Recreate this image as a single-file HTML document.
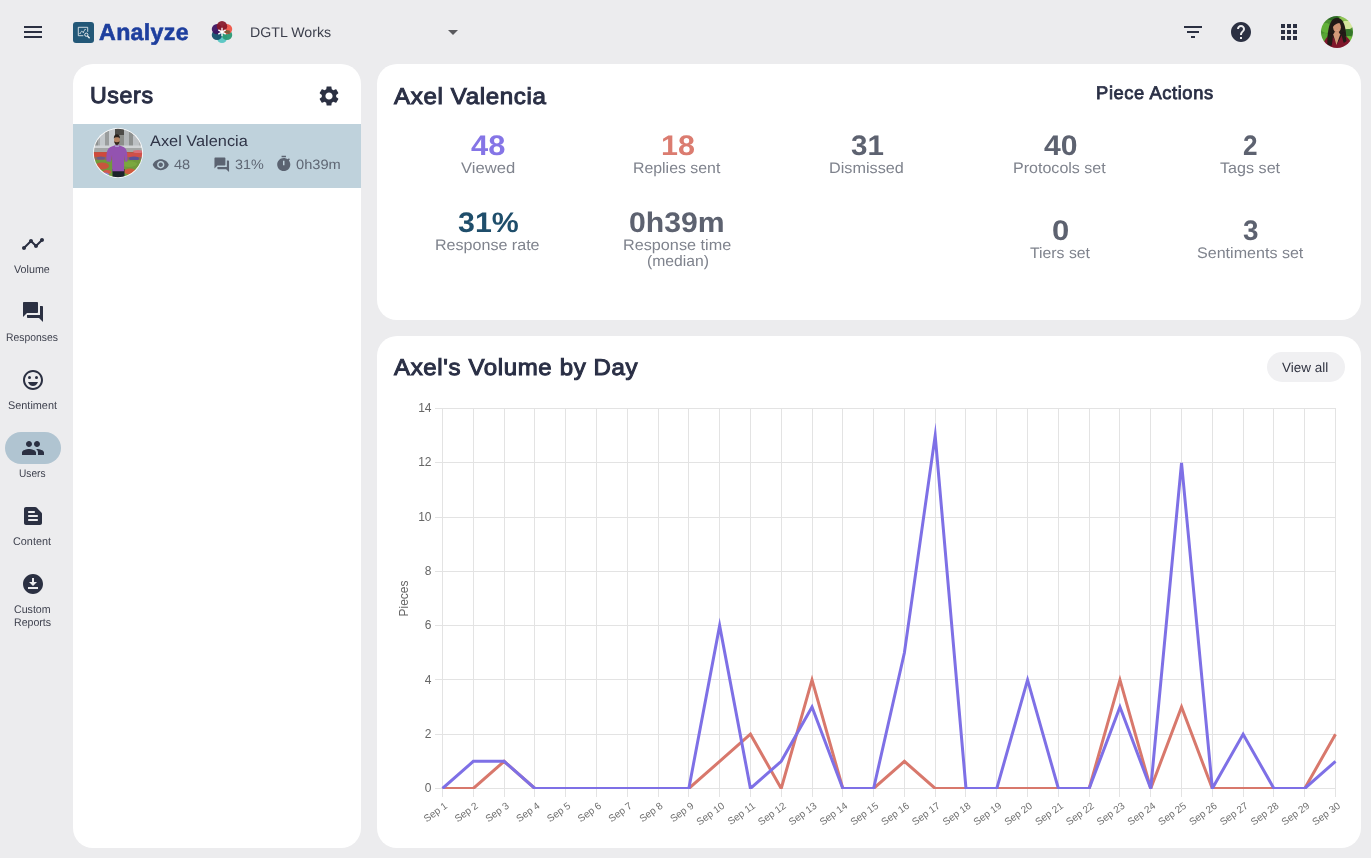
<!DOCTYPE html>
<html lang="en">
<head>
<meta charset="utf-8">
<title>Analyze - Users</title>
<style>
*{box-sizing:border-box;margin:0;padding:0}
html,body{width:1371px;height:858px;overflow:hidden}
body{background:#ECECEE;font-family:"Liberation Sans",sans-serif;color:#2a2f45;position:relative}
.abs{position:absolute}
svg{display:block}
.ico{position:absolute;width:24px;height:24px;fill:#2b3042}
.card{position:absolute;background:#fff;border-radius:20px}
.t{position:absolute;white-space:nowrap;line-height:1;transform-origin:0 0;text-rendering:geometricPrecision}
.c{transform:translateX(-50%);text-align:center}
.navl{position:absolute;left:0;width:64px;text-align:center;font-size:10.5px;line-height:13px;color:#3c3f4c;letter-spacing:.1px}
.h1{font-size:23.5px;font-weight:bold;color:#2a2f45}
.num{font-size:27px;font-weight:bold;color:#5d6270}
.lbl{font-size:14.5px;color:#7d818c}
</style>
</head>
<body>
<div id="root" style="position:absolute;left:0;top:0;width:1371px;height:858px;opacity:.999">
<!-- top bar -->
<svg class="ico" style="left:21px;top:20px" viewBox="0 0 24 24"><path d="M3 18h18v-2H3v2zm0-5h18v-2H3v2zm0-7v2h18V6H3z"/></svg>
<div class="abs" style="left:73px;top:21.5px;width:21px;height:21px;border-radius:3px;background:#235878"></div>
<svg class="abs" style="left:73px;top:21.500px;width:21px;height:21px" viewBox="0 0 21 21" fill="none" stroke="#fff" stroke-opacity=".85" stroke-width=".9"><path d="M14.700 9.800V5.300H5.300v8.400h5"/><path d="M7 11.600l1.600-2.400 1.700 1 1.800-2.800" stroke-width=".8" stroke-opacity=".8"/><circle cx="7" cy="11.600" r=".5" fill="#fff" stroke="none"/><circle cx="10.300" cy="10.200" r=".5" fill="#fff" stroke="none"/><circle cx="12.100" cy="7.400" r=".5" fill="#fff" stroke="none"/><circle cx="13.300" cy="12.700" r="1.600" stroke-opacity=".95"/><path d="M14.500 14l2.100 2.200" stroke-width="1.300" stroke-opacity=".95"/></svg>
<!-- flower logo -->
<svg class="abs" style="left:210.200px;top:19.700px;width:24px;height:24px" viewBox="-12 -12 24 24"><circle cx="0.00" cy="5.80" r="5.2" fill="#5FC8C5" fill-opacity="1"/><circle cx="-5.02" cy="2.90" r="5.2" fill="#17536E" fill-opacity="0.97"/><circle cx="5.02" cy="2.90" r="5.2" fill="#2A9A74" fill-opacity="0.95"/><circle cx="5.02" cy="-2.90" r="5.2" fill="#EE5547" fill-opacity="0.95"/><circle cx="-5.02" cy="-2.90" r="5.2" fill="#3E1562" fill-opacity="0.95"/><circle cx="0.00" cy="-5.80" r="5.2" fill="#86182A" fill-opacity="0.93"/><path d="M2 0.300L7.500 2.200 8 -1.200 3.500-2z" fill="#6d5a3a" fill-opacity=".85"/><g stroke="#fff" stroke-width="1.350"><path d="M0 -4.300V4.300M-3.700 -2.150L3.700 2.150M-3.700 2.150L3.700 -2.150"/></g><circle r="1.300" fill="#fff"/></svg>
<svg class="ico" style="left:441px;top:20px;fill:#5a5a5e" viewBox="0 0 24 24"><path d="M7 10l5 5 5-5z"/></svg>
<svg class="ico" style="left:1181px;top:20px" viewBox="0 0 24 24"><path d="M10 18h4v-2h-4v2zM3 6v2h18V6H3zm3 7h12v-2H6v2z"/></svg>
<svg class="ico" style="left:1229px;top:20px" viewBox="0 0 24 24"><path d="M12 2C6.480 2 2 6.480 2 12s4.480 10 10 10 10-4.480 10-10S17.520 2 12 2zm1 17h-2v-2h2v2zm2.070-7.750l-.9.920C13.450 12.900 13 13.500 13 15h-2v-.5c0-1.100.45-2.100 1.170-2.830l1.240-1.260c.37-.36.590-.86.590-1.410 0-1.100-.9-2-2-2s-2 .9-2 2H8c0-2.210 1.790-4 4-4s4 1.790 4 4c0 .88-.36 1.680-.93 2.250z"/></svg>
<svg class="ico" style="left:1277px;top:20px" viewBox="0 0 24 24"><path d="M4 8h4V4H4v4zm6 12h4v-4h-4v4zm-6 0h4v-4H4v4zm0-6h4v-4H4v4zm6 0h4v-4h-4v4zm6-10v4h4V4h-4zm-6 4h4V4h-4v4zm6 6h4v-4h-4v4zm0 6h4v-4h-4v4z"/></svg>
<!-- user avatar top right -->
<svg class="abs" style="left:1321px;top:16px;width:32px;height:32px" viewBox="0 0 32 32">
<defs><clipPath id="av1"><circle cx="16" cy="16" r="16"/></clipPath><filter id="bl1" x="-20%" y="-20%" width="140%" height="140%"><feGaussianBlur stdDeviation=".7"/></filter></defs>
<g clip-path="url(#av1)"><g filter="url(#bl1)">
<rect x="-4" y="-4" width="40" height="40" fill="#4a8f2e"/>
<ellipse cx="26" cy="9" rx="6" ry="4.500" fill="#d4e79c"/>
<ellipse cx="24" cy="2.500" rx="6" ry="2.500" fill="#8fc455"/>
<ellipse cx="5" cy="12" rx="5" ry="5" fill="#62b037"/>
<ellipse cx="4" cy="21" rx="4" ry="4" fill="#58a535"/>
<ellipse cx="12" cy="2" rx="6" ry="2.500" fill="#2f6a25"/>
<ellipse cx="27" cy="17" rx="5" ry="4" fill="#35762a"/>
<ellipse cx="28" cy="23" rx="4" ry="3" fill="#6dbb3a"/>
<path d="M6 32c0-9 1-20 3-24 1.500-4 4-6.200 7-6.200s5.500 2 7 6c2 5 2.500 12 2.500 24z" fill="#231a19"/>
<ellipse cx="16" cy="11.200" rx="3.900" ry="5.200" fill="#cf9472"/>
<path d="M11.500 11c0-4 2-6.500 4.500-6.500 1.500 0 3 1 3.800 2.500-2.300-.5-5.300.5-8.300 4z" fill="#231a19"/>
<path d="M2 34c0-9 3-14 9-15l5 9 5-9c6 1 10 6 10 15z" fill="#7f142b"/>
<path d="M12.200 18.500l3.300 10.500 3.700-10.500-1.500-2.500h-4z" fill="#d39a78"/>
<path d="M14 13.500c1 1.200 3 1.200 4 0-.5 1.500-3.500 1.500-4 0z" fill="#f3dfd4"/><path d="M7.500 17c-1 4-1.500 8-1 12l4 1c1-4 1.500-8 1.200-12z" fill="#231a19"/><path d="M20.300 17.500c.5 3 1.500 6.500 2.500 9.500l2.800-2c-.8-3-1.300-6-1.600-9z" fill="#231a19"/>
</g></g></svg>

<!-- side nav -->
<svg class="ico" style="left:21px;top:232px" viewBox="0 0 24 24"><path d="M23 8c0 1.100-.9 2-2 2-.18 0-.35-.02-.51-.07l-3.560 3.550c.05.160.07.340.07.520 0 1.100-.9 2-2 2s-2-.9-2-2c0-.18.020-.36.070-.52l-2.550-2.550c-.16.050-.34.070-.52.070s-.36-.02-.52-.07l-4.550 4.560c.05.160.07.330.07.510 0 1.100-.9 2-2 2s-2-.9-2-2 .9-2 2-2c.18 0 .35.020.51.070l4.560-4.550C8.020 9.360 8 9.180 8 9c0-1.100.9-2 2-2s2 .9 2 2c0 .18-.02.360-.07.520l2.550 2.550c.16-.05.340-.07.520-.07s.36.020.52.070l3.550-3.560C19.020 8.350 19 8.180 19 8c0-1.100.9-2 2-2s2 .9 2 2z"/></svg>
<svg class="ico" style="left:21px;top:300px" viewBox="0 0 24 24"><path d="M21 6h-2v9H6v2c0 .55.450 1 1 1h11l4 4V7c0-.55-.45-1-1-1zm-4 6V3c0-.55-.45-1-1-1H3c-.55 0-1 .45-1 1v14l4-4h10c.55 0 1-.45 1-1z"/></svg>
<svg class="ico" style="left:21px;top:368px" viewBox="0 0 24 24"><circle cx="15.500" cy="9.500" r="1.500"/><circle cx="8.500" cy="9.500" r="1.500"/><path d="M11.990 2C6.470 2 2 6.480 2 12s4.470 10 9.990 10C17.520 22 22 17.520 22 12S17.520 2 11.990 2zM12 20c-4.420 0-8-3.580-8-8s3.580-8 8-8 8 3.580 8 8-3.580 8-8 8zm-5-6c.78 2.340 2.720 4 5 4s4.220-1.660 5-4H7z"/></svg>
<div class="abs" style="left:5px;top:432px;width:56px;height:32px;border-radius:16px;background:#B0C4D1"></div>
<svg class="ico" style="left:21px;top:436px" viewBox="0 0 24 24"><path d="M16 11c1.660 0 2.990-1.340 2.990-3S17.660 5 16 5c-1.660 0-3 1.340-3 3s1.340 3 3 3zm-8 0c1.660 0 2.990-1.340 2.990-3S9.660 5 8 5C6.340 5 5 6.340 5 8s1.340 3 3 3zm0 2c-2.330 0-7 1.170-7 3.500V19h14v-2.500c0-2.330-4.670-3.500-7-3.500zm8 0c-.29 0-.62.020-.97.050 1.160.84 1.970 1.970 1.970 3.450V19h6v-2.500c0-2.330-4.670-3.500-7-3.500z"/></svg>
<svg class="ico" style="left:21px;top:504px" viewBox="0 0 24 24"><path d="M14.170 3H5c-1.100 0-2 .9-2 2v14c0 1.100.9 2 2 2h14c1.100 0 2-.9 2-2V9.830c0-.53-.21-1.040-.59-1.410l-4.830-4.830c-.37-.38-.88-.59-1.410-.59zM8 15h8c.55 0 1 .45 1 1s-.45 1-1 1H8c-.55 0-1-.45-1-1s.45-1 1-1zm0-4h8c.55 0 1 .45 1 1s-.45 1-1 1H8c-.55 0-1-.45-1-1s.45-1 1-1zm0-4h5c.55 0 1 .45 1 1s-.45 1-1 1H8c-.55 0-1-.45-1-1s.45-1 1-1z"/></svg>
<svg class="ico" style="left:21px;top:572px" viewBox="0 0 24 24"><path d="M12 2C6.490 2 2 6.490 2 12s4.490 10 10 10 10-4.490 10-10S17.510 2 12 2zm-1 8V6h2v4h3l-4 4-4-4h3zm6 7H7v-2h10v2z"/></svg>

<!-- users card -->
<div class="card" style="left:73px;top:64px;width:288px;height:784px"></div>
<svg class="ico" style="left:317.400px;top:84px" viewBox="0 0 24 24"><path d="M19.140 12.940c.04-.3.060-.61.060-.94 0-.32-.02-.64-.07-.94l2.030-1.580c.18-.14.230-.41.120-.61l-1.920-3.320c-.12-.22-.37-.29-.59-.22l-2.390.96c-.5-.38-1.030-.7-1.620-.94l-.36-2.540c-.04-.24-.24-.41-.48-.41h-3.840c-.24 0-.43.170-.47.410l-.36 2.540c-.59.240-1.130.570-1.620.94l-2.390-.96c-.22-.08-.47 0-.59.220L2.740 8.870c-.12.210-.08.470.12.610l2.030 1.580c-.05.300-.09.630-.09.940s.02.640.07.940l-2.030 1.580c-.18.140-.23.410-.12.610l1.920 3.320c.12.220.37.290.59.220l2.390-.96c.5.380 1.030.7 1.620.94l.36 2.540c.05.240.24.410.48.410h3.840c.24 0 .44-.17.470-.41l.36-2.540c.59-.24 1.130-.56 1.620-.94l2.390.96c.22.080.47 0 .59-.22l1.920-3.320c.12-.22.070-.47-.12-.61l-2.010-1.580zM12 15.600c-1.980 0-3.600-1.620-3.600-3.600s1.620-3.600 3.600-3.600 3.600 1.620 3.600 3.600-1.620 3.600-3.600 3.600z"/></svg>
<div class="abs" style="left:73px;top:124px;width:288px;height:64px;background:#BFD2DC"></div>
<!-- axel avatar -->
<svg class="abs" style="left:93px;top:128px;width:50px;height:50px" viewBox="0 0 50 50">
<defs><clipPath id="av2"><circle cx="25" cy="25" r="24.200"/></clipPath><filter id="bl2" x="-20%" y="-20%" width="140%" height="140%"><feGaussianBlur stdDeviation=".55"/></filter></defs>
<circle cx="25" cy="25" r="25" fill="#fff"/>
<g clip-path="url(#av2)"><g filter="url(#bl2)">
<rect x="-4" y="-4" width="58" height="30" fill="#a9acad"/>
<rect x="-2" y="4" width="7" height="20" fill="#8f9292"/>
<rect x="7" y="3" width="5" height="21" fill="#c3c8cb"/>
<rect x="12" y="3" width="4" height="21" fill="#9a9d9d"/>
<rect x="16" y="1" width="6" height="23" fill="#c9cdd0"/>
<rect x="22" y="0" width="9" height="7" fill="#4d4c47"/>
<rect x="22" y="7" width="9" height="17" fill="#8b8d89"/>
<rect x="31" y="2" width="5" height="22" fill="#b3b7b9"/>
<rect x="36" y="4" width="4" height="20" fill="#8d908f"/>
<rect x="40" y="8" width="6" height="16" fill="#bcc0c3"/>
<rect x="-2" y="17.500" width="54" height="2.500" fill="#d0d3d5"/>
<rect x="-2" y="20" width="54" height="4" fill="#a4a7a6"/>
<rect x="-2" y="24" width="54" height="9" fill="#b8563f"/>
<rect x="-2" y="24.500" width="20" height="4" fill="#cf4a3c"/>
<rect x="34" y="25" width="16" height="4" fill="#d0504a"/>
<ellipse cx="45" cy="23.500" rx="5" ry="1.500" fill="#d9707a"/>
<rect x="-2" y="29" width="54" height="3" fill="#8a6a5a"/>
<ellipse cx="41" cy="30.500" rx="5" ry="2" fill="#5b4f9a"/>
<ellipse cx="8" cy="30" rx="4" ry="1.500" fill="#6a5a8a"/>
<rect x="-2" y="32" width="54" height="22" fill="#6f9a3a"/>
<ellipse cx="36" cy="36" rx="8" ry="3" fill="#7aa83e"/>
<ellipse cx="9" cy="38" rx="7" ry="3.500" fill="#c8553c"/>
<ellipse cx="14" cy="44" rx="4" ry="2" fill="#d4574a"/>
<ellipse cx="37" cy="43.500" rx="6" ry="3" fill="#cf5a3e"/>
<ellipse cx="12" cy="46.500" rx="4" ry="2" fill="#8a86c0"/>
<rect x="19.500" y="41" width="12" height="10" fill="#1c202c"/>
<path d="M13.500 33.500c-.5-8 .5-13 4-14.500l4.500-1.700h4l4.500 1.700c3.500 1.500 4 6 4 14.500l-2.200.3-1-6.500-.3 16H19.300l-.3-16-1.300 6.500z" fill="#9352b0"/>
<path d="M22 17.200l2 1 2-1-.3 1.500h-3.400z" fill="#b9bde0"/>
<ellipse cx="23.900" cy="12" rx="2.900" ry="3.900" fill="#b58464"/>
<path d="M20.800 10.500c0-3 1.400-4.300 3.100-4.300s3.100 1.300 3.100 4.300c-1-1.700-5.200-1.700-6.200 0z" fill="#29221f"/>
<path d="M21.200 13.300c.4 2.600 1.500 3.700 2.700 3.700s2.300-1.100 2.700-3.700c-1.500 1.200-3.900 1.200-5.400 0z" fill="#35271f"/>
</g></g></svg>
<svg class="abs" style="left:152.300px;top:155.700px;width:17.500px;height:17.500px;fill:#5b6371" viewBox="0 0 24 24"><path d="M12 4.500C7 4.500 2.730 7.610 1 12c1.730 4.390 6 7.500 11 7.500s9.270-3.110 11-7.500c-1.730-4.390-6-7.500-11-7.500zM12 17c-2.760 0-5-2.240-5-5s2.240-5 5-5 5 2.240 5 5-2.240 5-5 5zm0-8c-1.660 0-3 1.340-3 3s1.340 3 3 3 3-1.340 3-3-1.340-3-3-3z"/></svg>
<svg class="abs" style="left:213.200px;top:155.700px;width:17.500px;height:17.500px;fill:#5b6371" viewBox="0 0 24 24"><path d="M21 6h-2v9H6v2c0 .55.450 1 1 1h11l4 4V7c0-.55-.45-1-1-1zm-4 6V3c0-.55-.45-1-1-1H3c-.55 0-1 .45-1 1v14l4-4h10c.55 0 1-.45 1-1z"/></svg>
<svg class="abs" style="left:274.500px;top:155.300px;width:17.500px;height:17.500px;fill:#5b6371" viewBox="0 0 24 24"><path d="M9 1h6v2H9zM19.030 7.390l1.420-1.420c-.43-.51-.9-.99-1.410-1.410l-1.420 1.420C16.070 4.740 14.120 4 12 4c-4.970 0-9 4.030-9 9s4.020 9 9 9 9-4.030 9-9c0-2.120-.74-4.070-1.970-5.610zM13 14h-2V8h2v6z"/></svg>

<!-- stats card -->
<div class="card" style="left:377px;top:64px;width:984px;height:256px"></div>



<!-- chart card -->
<div class="card" style="left:377px;top:336px;width:984px;height:512px"></div>
<div class="abs" style="left:1266.500px;top:352px;width:78.500px;height:30px;border-radius:15px;background:#F0F0F2"></div>
<div class="t" style="left:99.10px;top:21.00px;font-size:23.2px;color:#1E3F9E;font-weight:bold;letter-spacing:0.3px;-webkit-text-stroke:0.6px #1E3F9E">Analyze</div>
<div class="t" style="left:249.89px;top:25.00px;font-size:14px;color:#3c3f4c;transform:scaleX(1.013)">DGTL Works</div>
<div class="t" style="left:14.40px;top:265.00px;font-size:11.1px;color:#3c3f4c;transform:scaleX(0.967)">Volume</div>
<div class="t" style="left:6.05px;top:333.00px;font-size:11.1px;color:#3c3f4c;transform:scaleX(0.935)">Responses</div>
<div class="t" style="left:7.85px;top:401.00px;font-size:11.1px;color:#3c3f4c;transform:scaleX(0.981)">Sentiment</div>
<div class="t" style="left:18.65px;top:469.00px;font-size:11.1px;color:#3c3f4c;transform:scaleX(0.914)">Users</div>
<div class="t" style="left:13.45px;top:537.00px;font-size:11.1px;color:#3c3f4c;transform:scaleX(0.977)">Content</div>
<div class="t" style="left:13.90px;top:605.00px;font-size:11.1px;color:#3c3f4c;transform:scaleX(0.958)">Custom</div>
<div class="t" style="left:13.55px;top:618.00px;font-size:11.1px;color:#3c3f4c;transform:scaleX(0.954)">Reports</div>
<div class="t" style="left:89.50px;top:84.00px;font-size:23px;color:#2a2f45;transform:scaleX(1.009);letter-spacing:0.6px;-webkit-text-stroke:1.0px #2a2f45">Users</div>
<div class="t" style="left:149.60px;top:134.00px;font-size:15.2px;color:#2f3447;transform:scaleX(1.076)">Axel Valencia</div>
<div class="t" style="left:173.80px;top:158.00px;font-size:13.6px;color:#5f6774;transform:scaleX(1.071)">48</div>
<div class="t" style="left:235.00px;top:158.00px;font-size:13.6px;color:#5f6774;transform:scaleX(1.058)">31%</div>
<div class="t" style="left:295.90px;top:158.00px;font-size:13.6px;color:#5f6774;transform:scaleX(1.077)">0h39m</div>
<div class="t" style="left:393.62px;top:85.00px;font-size:23px;color:#2a2f45;transform:scaleX(1.049);letter-spacing:0.6px;-webkit-text-stroke:1.0px #2a2f45">Axel Valencia</div>
<div class="t" style="left:1096.10px;top:84.00px;font-size:18.3px;color:#2a2f45;letter-spacing:0.6px;-webkit-text-stroke:0.8px #2a2f45">Piece Actions</div>
<div class="t" style="left:471.30px;top:131.00px;font-size:28.2px;color:#8575E6;font-weight:bold;transform:scaleX(1.095)">48</div>
<div class="t" style="left:661.02px;top:131.00px;font-size:28.2px;color:#DB7C70;font-weight:bold;transform:scaleX(1.082)">18</div>
<div class="t" style="left:850.70px;top:131.00px;font-size:28.2px;color:#5d6270;font-weight:bold;transform:scaleX(1.050)">31</div>
<div class="t" style="left:1044.10px;top:131.00px;font-size:28.2px;color:#5d6270;font-weight:bold;transform:scaleX(1.069)">40</div>
<div class="t" style="left:1243.40px;top:131.00px;font-size:28.2px;color:#5d6270;font-weight:bold;transform:scaleX(0.927)">2</div>
<div class="t" style="left:457.50px;top:208.00px;font-size:28.2px;color:#1F4E6B;font-weight:bold;transform:scaleX(1.077)">31%</div>
<div class="t" style="left:629.43px;top:208.00px;font-size:28.2px;color:#5d6270;font-weight:bold;transform:scaleX(1.071)">0h39m</div>
<div class="t" style="left:1051.70px;top:216.00px;font-size:28.2px;color:#5d6270;font-weight:bold;transform:scaleX(1.100)">0</div>
<div class="t" style="left:1242.60px;top:216.00px;font-size:28.2px;color:#5d6270;font-weight:bold;transform:scaleX(0.987)">3</div>
<div class="t" style="left:461.10px;top:161.00px;font-size:15.3px;color:#7f838d;transform:scaleX(1.087)">Viewed</div>
<div class="t" style="left:632.76px;top:161.00px;font-size:15.3px;color:#7f838d;transform:scaleX(1.037)">Replies sent</div>
<div class="t" style="left:829.24px;top:161.00px;font-size:15.3px;color:#7f838d;transform:scaleX(1.060)">Dismissed</div>
<div class="t" style="left:1013.35px;top:161.00px;font-size:15.3px;color:#7f838d;transform:scaleX(1.049)">Protocols set</div>
<div class="t" style="left:1219.70px;top:161.00px;font-size:15.3px;color:#7f838d;transform:scaleX(1.055)">Tags set</div>
<div class="t" style="left:435.45px;top:238.00px;font-size:15.3px;color:#7f838d;transform:scaleX(1.051)">Response rate</div>
<div class="t" style="left:622.94px;top:238.00px;font-size:15.3px;color:#7f838d;transform:scaleX(1.060)">Response time</div>
<div class="t" style="left:646.50px;top:254.00px;font-size:15.3px;color:#7f838d;transform:scaleX(1.027)">(median)</div>
<div class="t" style="left:1030.30px;top:246.00px;font-size:15.3px;color:#7f838d;transform:scaleX(1.032)">Tiers set</div>
<div class="t" style="left:1196.70px;top:246.00px;font-size:15.3px;color:#7f838d;transform:scaleX(1.051)">Sentiments set</div>
<div class="t" style="left:393.82px;top:356.00px;font-size:23px;color:#2a2f45;transform:scaleX(1.045);letter-spacing:0.6px;-webkit-text-stroke:1.0px #2a2f45">Axel's Volume by Day</div>
<div class="t" style="left:1282.00px;top:361.00px;font-size:13.3px;color:#303341;transform:scaleX(1.015)">View all</div>
<svg class="abs" style="left:0;top:0;width:1371px;height:858px;pointer-events:none;font-family:'Liberation Sans',sans-serif" viewBox="0 0 1371 858">
<path d="M442.5 408.0V796.5M473.5 408.0V796.5M504.5 408.0V796.5M534.5 408.0V796.5M565.5 408.0V796.5M596.5 408.0V796.5M627.5 408.0V796.5M658.5 408.0V796.5M688.5 408.0V796.5M719.5 408.0V796.5M750.5 408.0V796.5M781.5 408.0V796.5M812.5 408.0V796.5M842.5 408.0V796.5M873.5 408.0V796.5M904.5 408.0V796.5M935.5 408.0V796.5M965.5 408.0V796.5M996.5 408.0V796.5M1027.5 408.0V796.5M1058.5 408.0V796.5M1089.5 408.0V796.5M1119.5 408.0V796.5M1150.5 408.0V796.5M1181.5 408.0V796.5M1212.5 408.0V796.5M1243.5 408.0V796.5M1273.5 408.0V796.5M1304.5 408.0V796.5M1335.5 408.0V796.5M434.5 788.5H1336.0M434.5 734.5H1336.0M434.5 679.5H1336.0M434.5 625.5H1336.0M434.5 571.5H1336.0M434.5 517.5H1336.0M434.5 462.5H1336.0M434.5 408.5H1336.0" stroke="#000" stroke-opacity=".11" shape-rendering="crispEdges" stroke-width="1" fill="none"/>
<clipPath id="cc"><rect x="441" y="400" width="896" height="389"/></clipPath>
<polyline points="442.50,788.50 473.29,788.50 504.09,761.36 534.88,788.50 565.67,788.50 596.47,788.50 627.26,788.50 658.05,788.50 688.84,788.50 719.64,761.36 750.43,734.21 781.22,788.50 812.02,679.93 842.81,788.50 873.60,788.50 904.40,761.36 935.19,788.50 965.98,788.50 996.78,788.50 1027.57,788.50 1058.36,788.50 1089.16,788.50 1119.95,679.93 1150.74,788.50 1181.53,707.07 1212.33,788.50 1243.12,788.50 1273.91,788.50 1304.71,788.50 1335.50,734.21" fill="none" stroke="#D8786C" stroke-width="3" stroke-linejoin="miter" stroke-miterlimit="10" clip-path="url(#cc)"/>
<polyline points="442.50,788.50 473.29,761.36 504.09,761.36 534.88,788.50 565.67,788.50 596.47,788.50 627.26,788.50 658.05,788.50 688.84,788.50 719.64,625.64 750.43,788.50 781.22,761.36 812.02,707.07 842.81,788.50 873.60,788.50 904.40,652.79 935.19,435.64 965.98,788.50 996.78,788.50 1027.57,679.93 1058.36,788.50 1089.16,788.50 1119.95,707.07 1150.74,788.50 1181.53,462.79 1212.33,788.50 1243.12,734.21 1273.91,788.50 1304.71,788.50 1335.50,761.36" fill="none" stroke="#7E70E6" stroke-width="3" stroke-linejoin="miter" stroke-miterlimit="10" clip-path="url(#cc)"/>
<text x="431.5" y="792.20" text-anchor="end" font-size="12" fill="#666">0</text>
<text x="431.5" y="737.91" text-anchor="end" font-size="12" fill="#666">2</text>
<text x="431.5" y="683.63" text-anchor="end" font-size="12" fill="#666">4</text>
<text x="431.5" y="629.34" text-anchor="end" font-size="12" fill="#666">6</text>
<text x="431.5" y="575.06" text-anchor="end" font-size="12" fill="#666">8</text>
<text x="431.5" y="520.77" text-anchor="end" font-size="12" fill="#666">10</text>
<text x="431.5" y="466.49" text-anchor="end" font-size="12" fill="#666">12</text>
<text x="431.5" y="412.20" text-anchor="end" font-size="12" fill="#666">14</text>
<text transform="translate(442.50 799.5) rotate(-35.78)" x="0" y="9.5" text-anchor="end" font-size="10" fill="#6e6e6e">Sep 1</text>
<text transform="translate(473.29 799.5) rotate(-35.78)" x="0" y="9.5" text-anchor="end" font-size="10" fill="#6e6e6e">Sep 2</text>
<text transform="translate(504.09 799.5) rotate(-35.78)" x="0" y="9.5" text-anchor="end" font-size="10" fill="#6e6e6e">Sep 3</text>
<text transform="translate(534.88 799.5) rotate(-35.78)" x="0" y="9.5" text-anchor="end" font-size="10" fill="#6e6e6e">Sep 4</text>
<text transform="translate(565.67 799.5) rotate(-35.78)" x="0" y="9.5" text-anchor="end" font-size="10" fill="#6e6e6e">Sep 5</text>
<text transform="translate(596.47 799.5) rotate(-35.78)" x="0" y="9.5" text-anchor="end" font-size="10" fill="#6e6e6e">Sep 6</text>
<text transform="translate(627.26 799.5) rotate(-35.78)" x="0" y="9.5" text-anchor="end" font-size="10" fill="#6e6e6e">Sep 7</text>
<text transform="translate(658.05 799.5) rotate(-35.78)" x="0" y="9.5" text-anchor="end" font-size="10" fill="#6e6e6e">Sep 8</text>
<text transform="translate(688.84 799.5) rotate(-35.78)" x="0" y="9.5" text-anchor="end" font-size="10" fill="#6e6e6e">Sep 9</text>
<text transform="translate(719.64 799.5) rotate(-35.78)" x="0" y="9.5" text-anchor="end" font-size="10" fill="#6e6e6e">Sep 10</text>
<text transform="translate(750.43 799.5) rotate(-35.78)" x="0" y="9.5" text-anchor="end" font-size="10" fill="#6e6e6e">Sep 11</text>
<text transform="translate(781.22 799.5) rotate(-35.78)" x="0" y="9.5" text-anchor="end" font-size="10" fill="#6e6e6e">Sep 12</text>
<text transform="translate(812.02 799.5) rotate(-35.78)" x="0" y="9.5" text-anchor="end" font-size="10" fill="#6e6e6e">Sep 13</text>
<text transform="translate(842.81 799.5) rotate(-35.78)" x="0" y="9.5" text-anchor="end" font-size="10" fill="#6e6e6e">Sep 14</text>
<text transform="translate(873.60 799.5) rotate(-35.78)" x="0" y="9.5" text-anchor="end" font-size="10" fill="#6e6e6e">Sep 15</text>
<text transform="translate(904.40 799.5) rotate(-35.78)" x="0" y="9.5" text-anchor="end" font-size="10" fill="#6e6e6e">Sep 16</text>
<text transform="translate(935.19 799.5) rotate(-35.78)" x="0" y="9.5" text-anchor="end" font-size="10" fill="#6e6e6e">Sep 17</text>
<text transform="translate(965.98 799.5) rotate(-35.78)" x="0" y="9.5" text-anchor="end" font-size="10" fill="#6e6e6e">Sep 18</text>
<text transform="translate(996.78 799.5) rotate(-35.78)" x="0" y="9.5" text-anchor="end" font-size="10" fill="#6e6e6e">Sep 19</text>
<text transform="translate(1027.57 799.5) rotate(-35.78)" x="0" y="9.5" text-anchor="end" font-size="10" fill="#6e6e6e">Sep 20</text>
<text transform="translate(1058.36 799.5) rotate(-35.78)" x="0" y="9.5" text-anchor="end" font-size="10" fill="#6e6e6e">Sep 21</text>
<text transform="translate(1089.16 799.5) rotate(-35.78)" x="0" y="9.5" text-anchor="end" font-size="10" fill="#6e6e6e">Sep 22</text>
<text transform="translate(1119.95 799.5) rotate(-35.78)" x="0" y="9.5" text-anchor="end" font-size="10" fill="#6e6e6e">Sep 23</text>
<text transform="translate(1150.74 799.5) rotate(-35.78)" x="0" y="9.5" text-anchor="end" font-size="10" fill="#6e6e6e">Sep 24</text>
<text transform="translate(1181.53 799.5) rotate(-35.78)" x="0" y="9.5" text-anchor="end" font-size="10" fill="#6e6e6e">Sep 25</text>
<text transform="translate(1212.33 799.5) rotate(-35.78)" x="0" y="9.5" text-anchor="end" font-size="10" fill="#6e6e6e">Sep 26</text>
<text transform="translate(1243.12 799.5) rotate(-35.78)" x="0" y="9.5" text-anchor="end" font-size="10" fill="#6e6e6e">Sep 27</text>
<text transform="translate(1273.91 799.5) rotate(-35.78)" x="0" y="9.5" text-anchor="end" font-size="10" fill="#6e6e6e">Sep 28</text>
<text transform="translate(1304.71 799.5) rotate(-35.78)" x="0" y="9.5" text-anchor="end" font-size="10" fill="#6e6e6e">Sep 29</text>
<text transform="translate(1335.50 799.5) rotate(-35.78)" x="0" y="9.5" text-anchor="end" font-size="10" fill="#6e6e6e">Sep 30</text>
<text transform="translate(408 598.5) rotate(-90)" text-anchor="middle" font-size="12" fill="#666">Pieces</text>

</svg>
</div>
</body>
</html>
